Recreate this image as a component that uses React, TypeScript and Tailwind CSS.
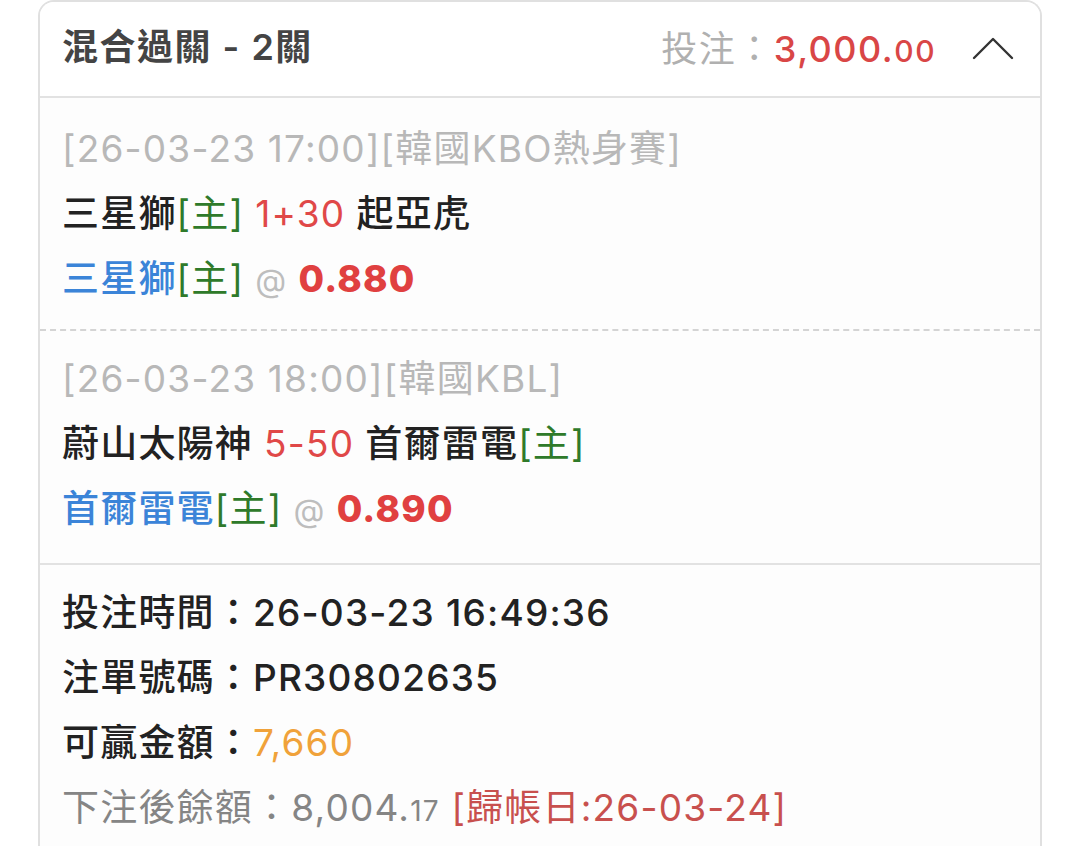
const font = { fontFamily: 'Inter, "Noto Sans CJK TC", sans-serif' };

function Home() {
  return <span className="text-[#2f7a2a] font-normal">[主]</span>;
}

function Leg({
  time,
  league,
  home,
  line,
  away,
  pickName,
  odds,
  homeFirst,
  last,
}: {
  time: string;
  league: string;
  home: string;
  line: string;
  away: string;
  pickName: string;
  odds: string;
  homeFirst: boolean;
  last?: boolean;
}) {
  return (
    <div
      className={
        "px-[22px] leading-[65px] " +
        (last
          ? "pt-[15px] pb-[20px] border-b-2 border-[#e2e2e2]"
          : "pt-[18px] pb-[16px] border-b-2 border-dashed border-[#d4d4d4]")
      }
    >
      <div className="text-[#b8b8b8]">
        [{time}][{league}]
      </div>
      <div className="text-[#222] font-medium">
        {homeFirst ? (
          <>
            {home}
            <Home /> <span className="text-[#e04848] font-normal">{line}</span> {away}
          </>
        ) : (
          <>
            {away} <span className="text-[#e04848] font-normal">{line}</span> {home}
            <Home />
          </>
        )}
      </div>
      <div className="font-medium">
        <span className="text-[#3b84d8]">{pickName}</span>
        <Home /> <span className="text-[#bdbdbd] font-normal text-[32px]">@</span>{" "}
        <span className="text-[#e04040] font-extrabold">{odds}</span>
      </div>
    </div>
  );
}

export default function App() {
  return (
    <div className="min-h-[846px] bg-white" style={font}>
      <div className="ml-[38px] w-[1004px] h-[846px] border-2 border-b-0 border-[#e0e0e0] rounded-t-[16px] text-[37px] tracking-[1.2px] bg-[#fdfdfd] overflow-hidden">
        <div className="h-[96px] bg-white flex items-center justify-between pl-[22px] pr-[26px] border-b-2 border-[#e2e2e2] tracking-[1.5px]">
          <div className="text-[#444] font-semibold text-[36px] -mt-[4px]">混合過關 - 2關</div>
          <div className="flex items-center">
            <span className="text-[#b0b0b0] text-[36px]">投注：</span>
            <span className="text-[#d94646] text-[36px] font-medium">
              3,000.<span className="text-[30px]">00</span>
            </span>
            <svg
              className="ml-[36px] mb-[2px]"
              width="42"
              height="24"
              viewBox="0 0 42 24"
              fill="none"
              stroke="#333"
              strokeWidth="2.4"
              strokeLinecap="round"
              strokeLinejoin="round"
            >
              <polyline points="2,22 21,3 40,22" />
            </svg>
          </div>
        </div>
        <Leg
          time="26-03-23 17:00"
          league="韓國KBO熱身賽"
          home="三星獅"
          line="1+30"
          away="起亞虎"
          pickName="三星獅"
          odds="0.880"
          homeFirst
        />
        <Leg
          time="26-03-23 18:00"
          league="韓國KBL"
          home="首爾雷電"
          line="5-50"
          away="蔚山太陽神"
          pickName="首爾雷電"
          odds="0.890"
          homeFirst={false}
          last
        />
        <div className="px-[22px] pt-[15px] leading-[65px] font-medium text-[#222]">
          <div>投注時間：26-03-23 16:49:36</div>
          <div>注單號碼：PR30802635</div>
          <div>
            可贏金額：<span className="text-[#f0a23a] font-normal">7,660</span>
          </div>
          <div className="text-[#858585] font-normal">
            下注後餘額：8,004.<span className="text-[28px]">17</span>{" "}
            <span className="text-[#c8504e]">[歸帳日:26-03-24]</span>
          </div>
        </div>
      </div>
    </div>
  );
}
